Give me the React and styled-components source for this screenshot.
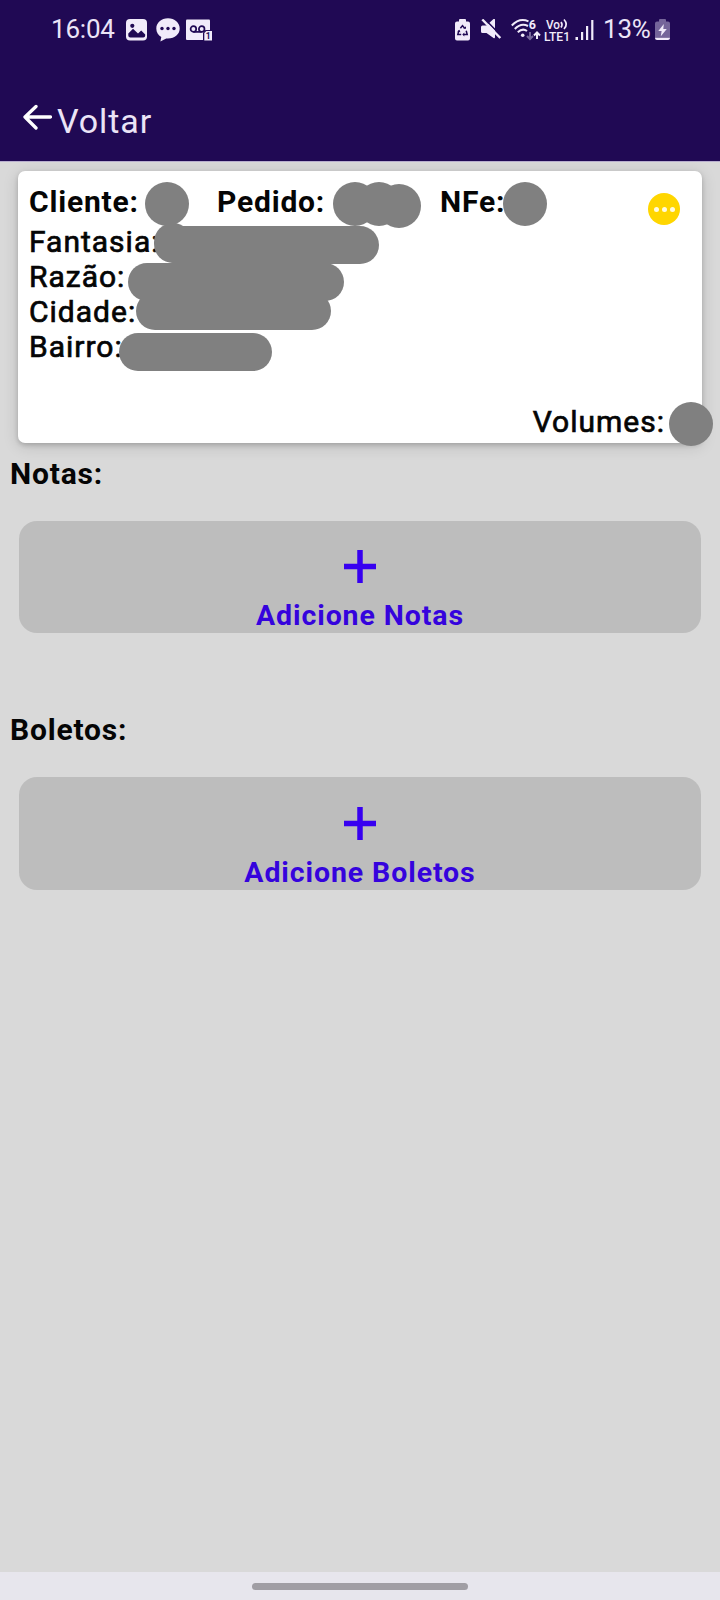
import React from "react";
import styled, { createGlobalStyle } from "styled-components";

const GlobalStyle = createGlobalStyle`
  * { box-sizing: border-box; }
  body { margin: 0; background: #d9d9d9; font-family: Roboto, "Noto Sans", sans-serif; }
`;

const Screen = styled.div`
  width: 720px;
  height: 1600px;
  display: flex;
  flex-direction: column;
  background: #d9d9d9;
  overflow: hidden;
`;

const Header = styled.header`
  height: 161px;
  flex: none;
  background: #200954;
  color: #ebe4f7;
  display: flex;
  flex-direction: column;
  box-shadow: 0 1px 0 #b9afcf;
`;

const StatusBar = styled.div`
  height: 59px;
  padding: 0 50px 0 51px;
  display: flex;
  justify-content: space-between;
  align-items: center;
`;

const StatusGroup = styled.div`
  display: flex;
  align-items: center;
  height: 59px;
`;

const StatusText = styled.span`
  font-size: 26px;
  line-height: 30px;
  letter-spacing: -0.2px;
  margin-top: -1px;
  width: ${(p) => p.$width};
  white-space: nowrap;
`;

const Glyph = styled.svg`
  display: block;
  flex: none;
  margin-left: ${(p) => p.$gap || 0}px;
`;

const BackBar = styled.button`
  height: 102px;
  border: 0;
  background: none;
  color: inherit;
  font-family: inherit;
  display: flex;
  align-items: flex-start;
  padding: 42px 0 0 22px;
`;

const BackArrowSlot = styled.span`
  padding-top: 2px;
`;

const BackLabel = styled.span`
  font-size: 34px;
  line-height: 40px;
  letter-spacing: 0.9px;
  margin-left: 5px;
`;

const Card = styled.section`
  position: relative;
  flex: none;
  height: 272px;
  margin: 10px 18px 0;
  padding: 13px 12px 0 11px;
  border-radius: 7px;
  background: #fff;
  color: #050505;
  box-shadow: 0 2px 5px rgba(0, 0, 0, 0.18), 0 3px 16px rgba(0, 0, 0, 0.14);
  display: flex;
  flex-direction: column;
`;

const OrderRow = styled.div`
  display: flex;
  height: 40px;
`;

const OrderField = styled.span`
  width: ${(p) => p.$width}px;
  font-size: 30px;
  font-weight: 700;
  line-height: 35px;
  letter-spacing: 0.8px;
`;

const Field = styled.div`
  font-size: 30px;
  line-height: 35px;
  letter-spacing: 1px;
  -webkit-text-stroke: 0.7px #050505;
`;

const Volumes = styled(Field)`
  margin: auto 25px 4px 0;
  align-self: flex-end;
`;

const MoreButton = styled.button`
  margin-left: auto;
  margin-right: 10px;
  margin-top: 9px;
  width: 32px;
  height: 32px;
  padding: 0;
  border: 0;
  border-radius: 50%;
  background: #ffd600;
  display: flex;
  align-items: center;
  justify-content: center;
  gap: 3px;
`;

const Dot = styled.i`
  width: 5px;
  height: 5px;
  border-radius: 50%;
  background: #fffbe0;
`;

const Mask = styled.span`
  position: absolute;
  left: ${(p) => p.$x}px;
  top: ${(p) => p.$y}px;
  width: ${(p) => p.$w}px;
  height: ${(p) => p.$h}px;
  border-radius: 22px;
  background: #808080;
`;

const Section = styled.section`
  flex: none;
  padding: ${(p) => p.$top}px 19px 0;
`;

const SectionTitle = styled.h2`
  margin: 0 0 30px -9px;
  font-size: 30px;
  font-weight: 700;
  line-height: 35px;
  letter-spacing: 0.8px;
  color: #050505;
`;

const AddButton = styled.button`
  width: 100%;
  height: ${(p) => p.$height}px;
  border: 0;
  padding: 0;
  border-radius: 18px;
  background: #bdbdbd;
  color: #3503dd;
  display: flex;
  flex-direction: column;
  align-items: center;
  justify-content: flex-end;
  font-family: inherit;
  font-size: 28.5px;
  font-weight: 700;
  line-height: 34px;
  letter-spacing: 0.9px;
`;

const AddLabel = styled.span`
  margin-top: 16px;
`;

const NavBar = styled.footer`
  margin-top: auto;
  height: 28px;
  flex: none;
  background: #e7e6ed;
  display: flex;
  justify-content: center;
  align-items: flex-start;
  padding-top: 11px;
`;

const NavHandle = styled.div`
  width: 216px;
  height: 7px;
  border-radius: 4px;
  background: #a09ea4;
`;

const masks = [
  [145, 182, 44, 44],
  [333, 182, 44, 44],
  [357, 182, 44, 44],
  [377, 184, 44, 44],
  [503, 182, 44, 44],
  [154, 223, 38, 40],
  [160, 226, 219, 38],
  [128, 263, 216, 38],
  [136, 292, 195, 38],
  [119, 333, 153, 38],
  [669, 402, 44, 44],
];

const FG = "#f1ebfa";
const BG = "#200954";

const PictureIcon = () => (
  <Glyph width="21" height="22" $gap={10}>
    <rect width="21" height="21.5" rx="4" fill={FG} />
    <circle cx="6.3" cy="6.8" r="2.1" fill={BG} />
    <path d="M2.3 16.500V14.500L7 9.800l5 4.800 3.200-3.200 4 4v1.100q0 2-2 2H4.300q-2 0-2-2z" fill={BG} />
  </Glyph>
);

const ChatIcon = () => (
  <Glyph width="24" height="24" $gap={9}>
    <path d="M12 .3C5.300.3.3 4.700.3 10.500c0 4 1.900 6.700 5 8.500l-.9 4.500 5.800-3.100c8.200.7 13.500-4 13.500-9.900C23.700 4.700 18.700.3 12 .3z" fill={FG} />
    <g fill={BG}><circle cx="6" cy="10.500" r="1.700" /><circle cx="12" cy="10.500" r="1.700" /><circle cx="18" cy="10.500" r="1.700" /></g>
  </Glyph>
);

const VoicemailIcon = () => (
  <Glyph width="27" height="22" $gap={6}>
    <rect y="0.500" width="24" height="20.500" rx="1" fill={FG} />
    <g fill="none" stroke={BG} strokeWidth="1.700"><circle cx="7.400" cy="10" r="2.800" /><circle cx="15.700" cy="10" r="2.800" /><path d="M7.400 12.900h8.300" /></g>
    <path d="M17 13.500l2.500-2.500H27v11H17z" fill={BG} />
    <path d="M18.300 14l2-2h5.700v9.500h-7.700z" fill={FG} />
    <text x="19.700" y="20" fontSize="8.500" fontWeight="700" fill={BG}>1</text>
  </Glyph>
);

const RecycleBatteryIcon = () => (
  <Glyph width="15" height="22">
    <path d="M4 2.500V1q0-1 1-1h5q1 0 1 1v1.500h2q2 0 2 2v15q0 2-2 2H2q-2 0-2-2v-15q0-2 2-2z" fill={FG} />
    <path d="M5.400 9.200L7.500 6.600l2.100 2.600M11.200 11.800l1 3.700H9M6.200 15.500H2.800l1-3.700" fill="none" stroke={BG} strokeWidth="1.500" />
    <path d="M8.400 9.800h2.600V7.300zM9.300 13.500v4l-2-2zM2.300 12.200l2.200-1.500.9 2.600z" fill={BG} />
  </Glyph>
);

const MuteIcon = () => (
  <Glyph width="21" height="21" $gap={11}>
    <path d="M0 8q0-1.500 1.500-1.500h4L12.500 0q1.500-.8 1.500 1v17q0 1.800-1.500 1l-7-5h-4Q0 14 0 12.500z" fill={FG} />
    <path d="M3.600 0L20 16.500" stroke={BG} strokeWidth="1.600" />
    <path d="M1.300 .5l18 18.500" stroke={FG} strokeWidth="2.400" />
  </Glyph>
);

const WifiIcon = () => (
  <Glyph width="30" height="24" $gap={9}>
    <g fill="none" stroke={FG} strokeWidth="2">
      <path d="M.8 7.500Q8.500-.8 17.500 3.300" />
      <path d="M3.800 11Q10 4.500 17 8" />
      <path d="M6.800 14.300Q11.500 9.700 16 13" />
    </g>
    <circle cx="11.700" cy="17.200" r="1.800" fill={FG} />
    <text x="17.800" y="10.500" fontSize="12.500" fontWeight="700" fill={FG}>6</text>
    <path d="M19 14v6.500M16 18l3 3 3-3" fill="none" stroke="#75659a" strokeWidth="2" />
    <path d="M26 21v-6.500M23 17.500l3-3 3 3" fill="none" stroke={FG} strokeWidth="2" />
  </Glyph>
);

const VolteIcon = () => (
  <Glyph width="27" height="24" $gap={3}>
    <g fill={FG} fontWeight="500">
      <text x="2" y="10.500" fontSize="12.500" textLength="14" lengthAdjust="spacingAndGlyphs">Vo</text>
      <text x="0" y="22.500" fontSize="13" textLength="26" lengthAdjust="spacingAndGlyphs">LTE1</text>
    </g>
    <path d="M17 4q2 2.500 0 5.500M20 1.500q4.500 5 0 9.500" fill="none" stroke={FG} strokeWidth="1.700" />
  </Glyph>
);

const SignalIcon = () => (
  <Glyph width="20" height="22" $gap={4}>
    <g fill={FG}>
      <rect x="0.500" y="18" width="2.500" height="3" />
      <rect x="6" y="13" width="2.200" height="8" />
      <rect x="11" y="7" width="2.200" height="14" />
      <rect x="16.200" y="1" width="2.200" height="20" />
    </g>
  </Glyph>
);

const ChargingIcon = () => (
  <Glyph width="15" height="22" $gap={5}>
    <path d="M4 2.500V1q0-1 1-1h5q1 0 1 1v1.500h2q2 0 2 2V18H0V4.500q0-2 2-2z" fill="#75659a" />
    <path d="M0 18.500h15v.5q0 2-2 2H2q-2 0-2-2z" fill={FG} />
    <path d="M8.800 5L3.300 12h3.300l-.8 5.300L11.800 10H8.300z" fill={FG} />
  </Glyph>
);

const BackArrow = () => (
  <Glyph width="30" height="28" viewBox="0 0 30 28">
    <path d="M28.500 14H3M14 3.500L3 14l11 11" fill="none" stroke="#fff" strokeWidth="3.300" strokeLinecap="round" strokeLinejoin="round" />
  </Glyph>
);

const PlusIcon = () => (
  <Glyph width="32" height="33">
    <path d="M0 16.500h32M16 0v33" stroke="#3700f0" strokeWidth="5.500" />
  </Glyph>
);

function AddSection({ title, label, top, height }) {
  return (
    <Section $top={top}>
      <SectionTitle>{title}</SectionTitle>
      <AddButton $height={height}>
        <PlusIcon />
        <AddLabel>{label}</AddLabel>
      </AddButton>
    </Section>
  );
}

export default function App() {
  return (
    <Screen>
      <GlobalStyle />
      <Header>
        <StatusBar>
          <StatusGroup>
            <StatusText $width="65px">16:04</StatusText>
            <PictureIcon />
            <ChatIcon />
            <VoicemailIcon />
          </StatusGroup>
          <StatusGroup>
            <RecycleBatteryIcon />
            <MuteIcon />
            <WifiIcon />
            <VolteIcon />
            <SignalIcon />
            <Glyph width="8" height="1" />
            <StatusText $width="47px">13%</StatusText>
            <ChargingIcon />
          </StatusGroup>
        </StatusBar>
        <BackBar>
          <BackArrowSlot>
            <BackArrow />
          </BackArrowSlot>
          <BackLabel>Voltar</BackLabel>
        </BackBar>
      </Header>
      <Card>
        <OrderRow>
          <OrderField $width={188}>Cliente:</OrderField>
          <OrderField $width={223}>Pedido:</OrderField>
          <OrderField $width={80}>NFe:</OrderField>
          <MoreButton aria-label="Mais">
            <Dot />
            <Dot />
            <Dot />
          </MoreButton>
        </OrderRow>
        <Field>Fantasia:</Field>
        <Field>Razão:</Field>
        <Field>Cidade:</Field>
        <Field>Bairro:</Field>
        <Volumes>Volumes:</Volumes>
        {masks.map(([x, y, w, h]) => (
          <Mask key={`${x}-${y}`} $x={x - 18} $y={y - 171} $w={w} $h={h} />
        ))}
      </Card>
      <AddSection title="Notas:" label="Adicione Notas" top={13} height={112} />
      <AddSection title="Boletos:" label="Adicione Boletos" top={79} height={113} />
      <NavBar>
        <NavHandle />
      </NavBar>
    </Screen>
  );
}
